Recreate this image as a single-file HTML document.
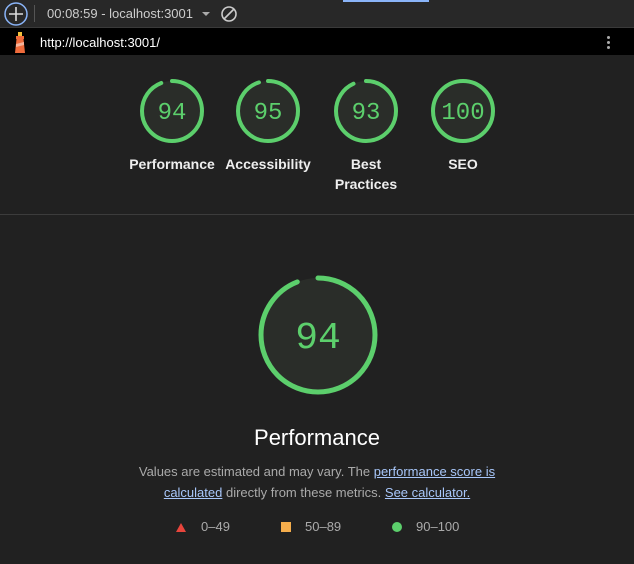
<!DOCTYPE html>
<html><head><style>
body{margin:0;width:634px;height:564px;background:#212121;font-family:"Liberation Sans",sans-serif;overflow:hidden;position:relative;color:#e8e8e8}
.top{position:absolute;left:0;top:0;width:634px;height:27px;background:#282828;border-bottom:1px solid #3a3a3a}
.url{position:absolute;left:0;top:28px;width:634px;height:27px;background:#000}
.g{position:absolute;text-align:center;font-size:14px;font-weight:bold;color:#eee;line-height:20px}
.num{font-family:"Liberation Mono",monospace;fill:#5ccf6c}
a{color:#a8c7fa;text-decoration:underline}
</style></head><body>
<div class="top">
<svg width="30" height="27" style="position:absolute;left:3px;top:0"><circle cx="13" cy="14" r="11" fill="none" stroke="#8ab4f8" stroke-width="1.5"/><path d="M13 7v14M6 14h14" stroke="#ddd" stroke-width="1.6"/></svg>
<div style="position:absolute;left:34px;top:5px;width:1px;height:17px;background:#555"></div>
<div style="position:absolute;left:47px;top:6px;font-size:13px;color:#ccc">00:08:59 - localhost:3001</div>
<div style="position:absolute;left:202px;top:12px;border:4px solid transparent;border-top:4px solid #aaa"></div>
<svg width="18" height="18" style="position:absolute;left:220px;top:5px"><circle cx="9" cy="9" r="7" fill="none" stroke="#ccc" stroke-width="1.6"/><path d="M4 14L14 4" stroke="#ccc" stroke-width="1.6"/></svg>
<div style="position:absolute;left:343px;top:0;width:86px;height:2px;background:#8ab4f8"></div>
</div>
<div class="url">
<svg width="20" height="26" style="position:absolute;left:10px;top:1px"><path d="M8 3h4v4H8z" fill="#f3c03b"/><path d="M6 7h8v3H6z" fill="#ef6b3b"/><path d="M6.5 10h7l1.5 14H5z" fill="#ef6b3b"/><path d="M6 15l8-2v3l-8 2z" fill="#f5b39a"/></svg>
<div style="position:absolute;left:40px;top:7px;font-size:13px;color:#fff">http://localhost:3001/</div>
<div style="position:absolute;left:607px;top:8px;width:3px;line-height:4px;font-size:0"><div style="width:3px;height:3px;background:#aaa;border-radius:2px;margin-bottom:2px"></div><div style="width:3px;height:3px;background:#aaa;border-radius:2px;margin-bottom:2px"></div><div style="width:3px;height:3px;background:#aaa;border-radius:2px"></div></div>
</div>
<svg width="634" height="564" style="position:absolute;left:0;top:0">
<g fill="#2a2d29">
<circle cx="172" cy="111" r="30"/><circle cx="268" cy="111" r="30"/><circle cx="366" cy="111" r="30"/><circle cx="463" cy="111" r="30"/><circle cx="318" cy="335" r="57"/></g>
<g fill="none" stroke="#5ccf6c" stroke-width="4" stroke-linecap="round">
<circle cx="172" cy="111" r="30" stroke-dasharray="177.2 188.5" transform="rotate(-90 172 111)"/>
<circle cx="268" cy="111" r="30" stroke-dasharray="179 188.5" transform="rotate(-90 268 111)"/>
<circle cx="366" cy="111" r="30" stroke-dasharray="175.3 188.5" transform="rotate(-90 366 111)"/>
<circle cx="463" cy="111" r="30" stroke-linecap="butt"/>
<circle cx="318" cy="335" r="57" stroke-width="5" stroke-dasharray="336.6 358.1" transform="rotate(-90 318 335)"/>
</g>
<g class="num" text-anchor="middle" font-size="24">
<text x="172" y="119">94</text><text x="268" y="119">95</text><text x="366" y="119">93</text><text x="463" y="119">100</text>
<text x="318" y="348" font-size="38">94</text></g>
<path d="M176 532l5-9 5 9z" fill="#e8453c"/>
<rect x="281" y="522" width="10" height="10" fill="#f4ad4c"/>
<circle cx="397" cy="527" r="5" fill="#5ccf6c"/>
</svg>
<div class="g" style="left:122px;top:154px;width:100px">Performance</div>
<div class="g" style="left:218px;top:154px;width:100px">Accessibility</div>
<div class="g" style="left:316px;top:154px;width:100px">Best<br>Practices</div>
<div class="g" style="left:413px;top:154px;width:100px">SEO</div>
<div style="position:absolute;left:0;top:214px;width:634px;height:1px;background:#3c3c3c"></div>
<div style="position:absolute;left:0;top:425px;width:634px;text-align:center;font-size:22px;color:#fff">Performance</div>
<div style="position:absolute;left:130px;top:461px;width:374px;text-align:center;font-size:13px;line-height:21px;color:#aaa">Values are estimated and may vary. The <a>performance score is calculated</a> directly from these metrics. <a>See calculator.</a></div>
<div style="position:absolute;left:201px;top:519px;font-size:13px;color:#aaa">0–49</div>
<div style="position:absolute;left:305px;top:519px;font-size:13px;color:#aaa">50–89</div>
<div style="position:absolute;left:416px;top:519px;font-size:13px;color:#aaa">90–100</div>
</body></html>
